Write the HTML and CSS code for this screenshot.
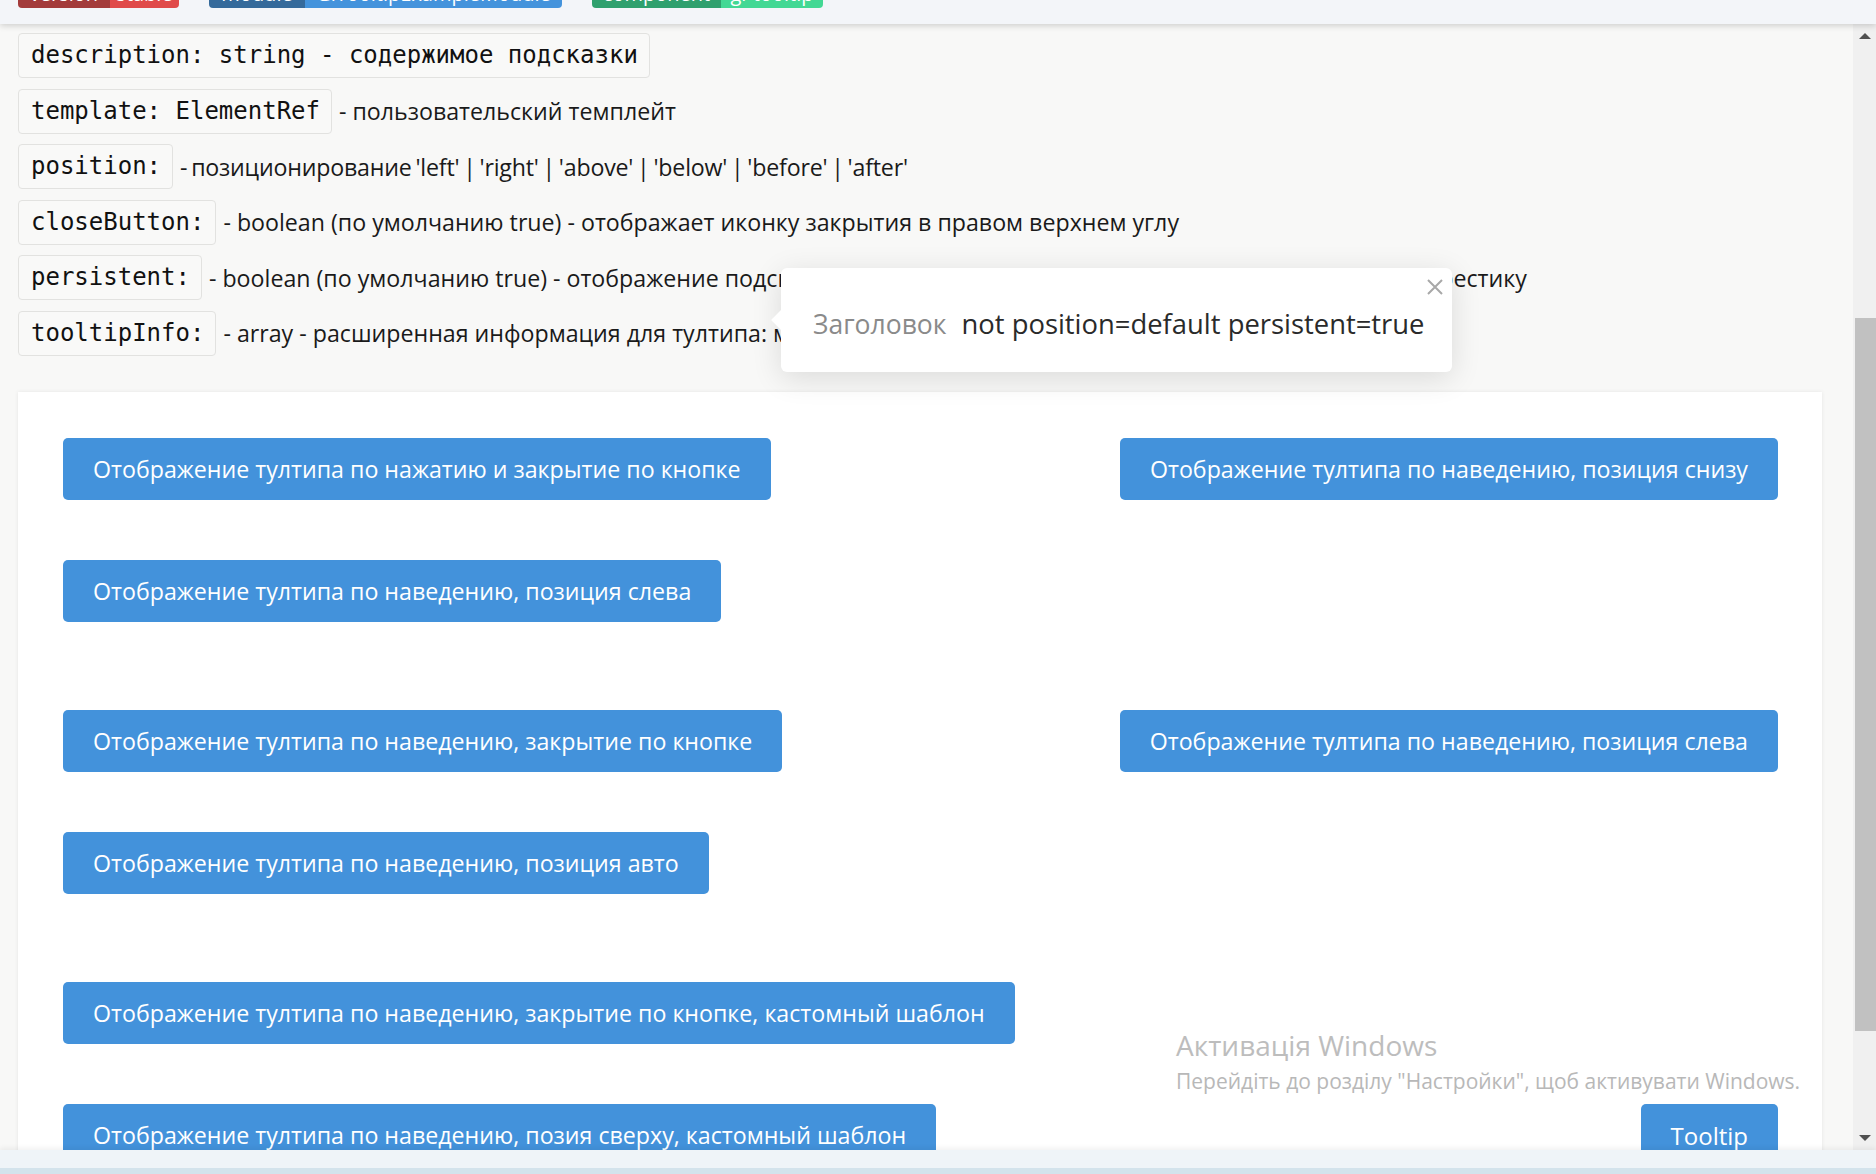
FILE: index.html
```
<!DOCTYPE html>
<html lang="ru">
<head>
  <meta charset="UTF-8" />
  <meta name="viewport" content="width=device-width, initial-scale=1.0" />
  <title>Tooltip</title>
  <link rel="stylesheet" href="styles.css">
</head>
<body>
  <div class="topbar">
    <div class="badge"><span class="badge-key red-dark w92">version</span><span class="badge-val red w69">stable</span></div>
    <div class="badge"><span class="badge-key blue-dark w96">module</span><span class="badge-val blue w257">GlTooltipExampleModule</span></div>
    <div class="badge"><span class="badge-key green-dark w129">component</span><span class="badge-val green w102">gl-tooltip</span></div>
  </div>

  <div class="viewport">
    <div class="page">
      <div class="props">
        <div class="prop"><code>description: string - содержимое подсказки</code></div>
        <div class="prop"><code>template: ElementRef</code> - пользовательский темплейт</div>
        <div class="prop tight"><code>position:</code> - позиционирование 'left' | 'right' | 'above' | 'below' | 'before' | 'after'</div>
        <div class="prop"><code>closeButton:</code> - boolean (по умолчанию true) - отображает иконку закрытия в правом верхнем углу</div>
        <div class="prop"><code>persistent:</code> - boolean (по умолчанию true) - отображение подсказки после ухода курсора мыши с элемента до клика на крестику</div>
        <div class="prop"><code>tooltipInfo:</code> - array - расширенная информация для тултипа: массив строк</div>
      </div>

      <div class="card">
        <div class="section">
          <div class="row">
            <button class="btn">Отображение тултипа по нажатию и закрытие по кнопке</button>
            <button class="btn">Отображение тултипа по наведению, позиция снизу</button>
          </div>
          <div class="row">
            <button class="btn">Отображение тултипа по наведению, позиция слева</button>
          </div>
        </div>
        <div class="section">
          <div class="row">
            <button class="btn">Отображение тултипа по наведению, закрытие по кнопке</button>
            <button class="btn">Отображение тултипа по наведению, позиция слева</button>
          </div>
          <div class="row">
            <button class="btn">Отображение тултипа по наведению, позиция авто</button>
          </div>
        </div>
        <div class="section">
          <div class="row">
            <button class="btn">Отображение тултипа по наведению, закрытие по кнопке, кастомный шаблон</button>
          </div>
          <div class="row">
            <button class="btn">Отображение тултипа по наведению, позия сверху, кастомный шаблон</button>
            <button class="btn btn-latin">Tooltip</button>
          </div>
        </div>
      </div>
    </div>

    <div class="scrollbar">
      <div class="arrow-up"></div>
      <div class="thumb"></div>
      <div class="arrow-down"></div>
    </div>
  </div>

  <div class="bottombar"></div>

  <div class="tooltip">
    <span class="tooltip-title">Заголовок</span>
    <span class="tooltip-text">not position=default persistent=true</span>
    <svg class="tooltip-close" width="16" height="16" viewBox="0 0 16 16">
      <path d="M1 1 L15 15 M15 1 L1 15" stroke="#a8a8a8" stroke-width="2" fill="none" />
    </svg>
  </div>

  <div class="watermark">
    <div class="wm-title">Активація Windows</div>
    <div class="wm-text">Перейдіть до розділу "Настройки", щоб активувати Windows.</div>
  </div>
</body>
</html>
```
FILE: styles.css
```
html, body {
  margin: 0;
  height: 100%;
  overflow: hidden;
}
body {
  font-family: "Open Sans", Arial, sans-serif;
  background: #f8f8f7;
  color: #1c1c1c;
  display: flex;
  flex-direction: column;
  position: relative;
}

/* top bar with badges */
.topbar {
  height: 24px;
  flex: none;
  background: #f3f5f9;
  box-shadow: 0 2px 6px rgba(0, 0, 0, 0.16);
  display: flex;
  gap: 30px;
  padding-left: 18px;
  position: relative;
  z-index: 2;
  overflow: hidden;
}
.badge {
  display: flex;
  height: 32px;
  margin-top: -24px;
  border-radius: 4px;
  overflow: hidden;
  font-size: 20px;
  line-height: 32px;
  color: #fff;
}
.badge span {
  display: block;
  text-align: center;
  padding-top: 2px;
}
.red-dark { background: #a33b3b; }
.red { background: #e04a4a; }
.blue-dark { background: #356a9b; }
.blue { background: #4493dc; }
.green-dark { background: #2fa06e; }
.green { background: #42d894; }
.w92 { width: 92px; }
.w69 { width: 69px; }
.w96 { width: 96px; }
.w257 { width: 257px; }
.w129 { width: 129px; }
.w102 { width: 102px; }

/* main scroll area */
.viewport {
  flex: 1;
  display: flex;
  min-height: 0;
}
.page {
  flex: 1;
  overflow: hidden;
  padding: 9px 31px 0 18px;
}

.props {
  display: flex;
  flex-direction: column;
  gap: 10.6px;
}
.prop {
  display: flex;
  align-items: center;
  font-size: 23.2px;
  white-space: nowrap;
  color: #1a1a1a;
}
.prop.tight {
  word-spacing: -2px;
  letter-spacing: -0.2px;
}
.prop code {
  font-family: "DejaVu Sans Mono", monospace;
  font-size: 24px;
  line-height: 27px;
  letter-spacing: 0;
  word-spacing: 0;
  padding: 8px 11px 8px 12px;
  border: 1px solid #e2e2e0;
  border-radius: 4px;
  background: #f9f9f8;
  margin-right: 7px;
  color: #111;
}

.card {
  margin-top: 36.5px;
  background: #fff;
  padding: 46px 44px 40px 45px;
  box-shadow: 0 0 4px rgba(0, 0, 0, 0.08);
}
.section {
  display: flex;
  flex-direction: column;
  gap: 60px;
  margin-bottom: 88px;
}
.row {
  display: flex;
  justify-content: space-between;
}
.btn {
  height: 62px;
  padding: 0 30px;
  border: none;
  border-radius: 5px;
  background: #4392db;
  color: #fff;
  font-family: "Open Sans", Arial, sans-serif;
  font-size: 23.2px;
  white-space: nowrap;
  cursor: pointer;
}
.btn-latin {
  font-size: 24px;
}

/* scrollbar */
.scrollbar {
  width: 23px;
  flex: none;
  background: #f0f0f0;
  position: relative;
}
.thumb {
  position: absolute;
  left: 2px;
  right: 0;
  top: 294px;
  height: 713px;
  background: #c1c1c1;
}
.arrow-up, .arrow-down {
  position: absolute;
  left: 6px;
  width: 0;
  height: 0;
  border-left: 6px solid transparent;
  border-right: 6px solid transparent;
}
.arrow-up {
  top: 9px;
  border-bottom: 6px solid #505050;
}
.arrow-down {
  bottom: 9px;
  border-top: 6px solid #505050;
}

.bottombar {
  height: 18px;
  flex: none;
  background: #eff4f8;
  border-bottom: 6px solid #d3e3ec;
  box-shadow: 0 -2px 5px rgba(0, 0, 0, 0.06);
  z-index: 2;
}

/* open tooltip */
.tooltip {
  position: absolute;
  left: 781px;
  top: 268px;
  width: 671px;
  height: 104px;
  box-sizing: border-box;
  padding: 7px 32px 0;
  background: #fff;
  border-radius: 6px;
  box-shadow: 0 6px 30px rgba(0, 0, 0, 0.12);
  display: flex;
  align-items: center;
  white-space: nowrap;
  font-size: 27.4px;
  z-index: 3;
}
.tooltip::before {
  content: "";
  position: absolute;
  left: -7px;
  top: 45px;
  width: 14px;
  height: 14px;
  background: #fff;
  transform: rotate(45deg);
}
.tooltip-title {
  color: #8a8a8a;
  font-size: 26.5px;
  margin-right: 15px;
  position: relative;
}
.tooltip-text {
  color: #2a2a2a;
  position: relative;
}
.tooltip-close {
  position: absolute;
  right: 9px;
  top: 11px;
}

/* windows watermark */
.watermark {
  position: absolute;
  left: 1176px;
  top: 1026px;
  color: #bdbdbd;
  white-space: nowrap;
  z-index: 1;
}
.wm-title {
  font-size: 28px;
  line-height: 38px;
}
.wm-text {
  font-size: 21px;
  line-height: 34px;
  color: #b8b8b8;
}
```
